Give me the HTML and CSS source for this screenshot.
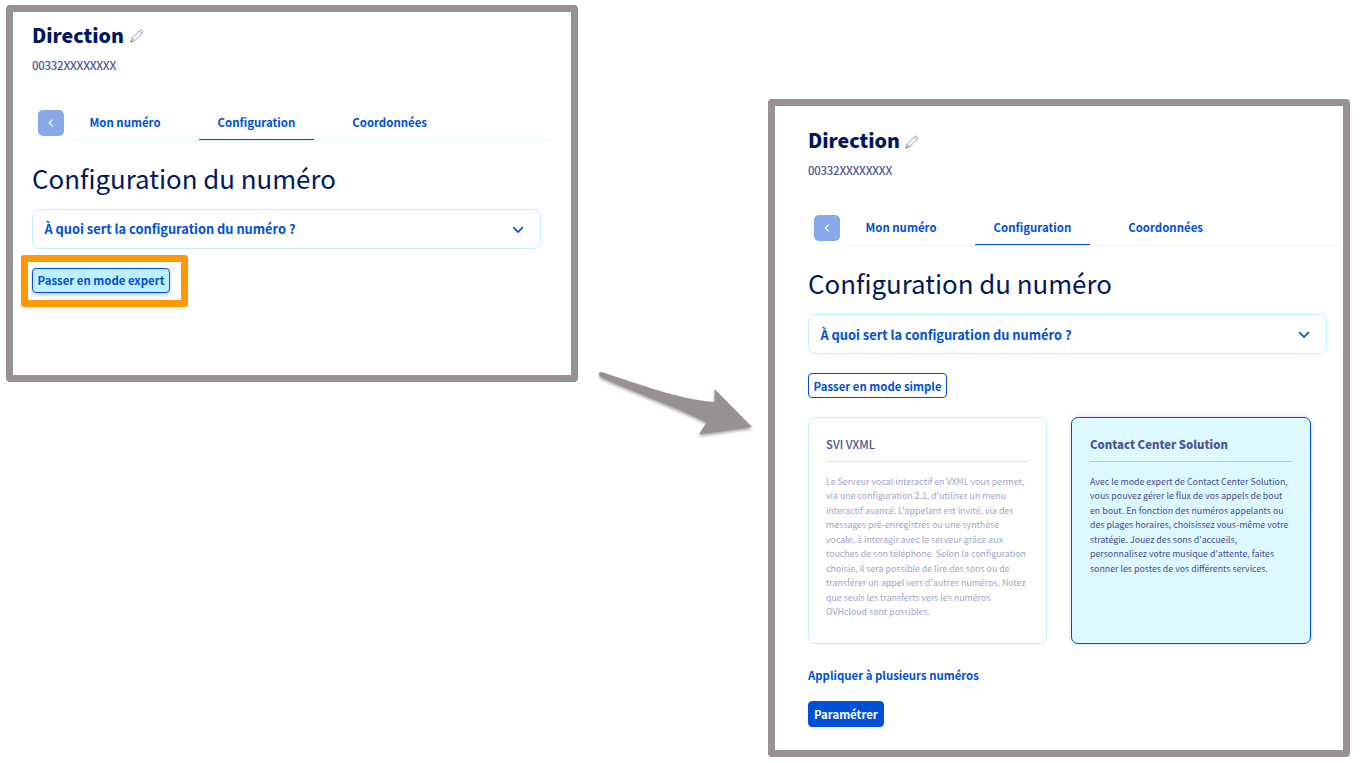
FILE: index.html
```html
<!DOCTYPE html>
<html lang="fr">
<head>
<meta charset="utf-8">
<title>Configuration du numéro</title>
<link rel="stylesheet" href="styles.css">
</head>
<body>
<svg class="defs" width="0" height="0" aria-hidden="true">
  <symbol id="pencil" viewBox="0 0 14 14">
    <path d="M1 13 2.2 9.2 10.2 1.2Q11 .5 11.9 1.3L12.6 2Q13.4 2.9 12.7 3.7L4.8 11.7ZM9.3 2.1 11.9 4.7M2.2 9.2 4.8 11.7"/>
    <path class="lead" d="M.9 13.1 1.5 11.2 2.8 12.5Z"/>
  </symbol>
  <symbol id="chevron-down" viewBox="0 0 12 8"><path d="M1.2 1.2 6 6 10.8 1.2"/></symbol>
  <symbol id="chevron-left" viewBox="0 0 6 8"><path d="M4.6 .7 1.3 4 4.6 7.3"/></symbol>
</svg>
<main class="board">
  <section class="panel panel-simple">
    <header class="title"><h1>Direction</h1><svg class="pencil"><use href="#pencil"/></svg></header>
    <p class="number">00332XXXXXXXX</p>
    <nav class="nav">
      <button class="back" aria-label="Retour"><svg><use href="#chevron-left"/></svg></button>
      <div class="tabs"><a class="tab">Mon numéro</a><a class="tab active">Configuration</a><a class="tab">Coordonnées</a></div>
    </nav>
    <h2>Configuration du numéro</h2>
    <div class="accordion"><span>À quoi sert la configuration du numéro ?</span><svg><use href="#chevron-down"/></svg></div>
    <div class="mode"><button class="btn hovered">Passer en mode expert</button><div class="highlight"></div></div>
  </section>

  <svg class="arrow" viewBox="0 0 160 74">
    <path d="M4.5 4Q1.500 4 2 7Q2.200 8 5 9.400C38 25 78 38 109.500 54.500L102 66.500L155 59L117.500 21V34C82 31.500 42 16 4.500 4Z"/>
  </svg>

  <section class="panel panel-expert">
    <header class="title"><h1>Direction</h1><svg class="pencil"><use href="#pencil"/></svg></header>
    <p class="number">00332XXXXXXXX</p>
    <nav class="nav">
      <button class="back" aria-label="Retour"><svg><use href="#chevron-left"/></svg></button>
      <div class="tabs"><a class="tab">Mon numéro</a><a class="tab active">Configuration</a><a class="tab">Coordonnées</a></div>
    </nav>
    <h2>Configuration du numéro</h2>
    <div class="accordion"><span>À quoi sert la configuration du numéro ?</span><svg><use href="#chevron-down"/></svg></div>
    <div class="mode"><button class="btn">Passer en mode simple</button></div>
    <div class="cards">
      <article class="card">
        <h3>SVI VXML</h3>
        <p>Le Serveur vocal interactif en VXML vous permet,<br>via une configuration 2.1, d'utiliser un menu<br>interactif avancé. L'appelant est invité, via des<br>messages pré-enregistrés ou une synthèse<br>vocale, à interagir avec le serveur grâce aux<br>touches de son téléphone. Selon la configuration<br>choisie, il sera possible de lire des sons ou de<br>transférer un appel vers d'autres numéros. Notez<br>que seuls les transferts vers les numéros<br>OVHcloud sont possibles.</p>
      </article>
      <article class="card selected">
        <h3>Contact Center Solution</h3>
        <p>Avec le mode expert de Contact Center Solution,<br>vous pouvez gérer le flux de vos appels de bout<br>en bout. En fonction des numéros appelants ou<br>des plages horaires, choisissez vous-même votre<br>stratégie. Jouez des sons d'accueils,<br>personnalisez votre musique d'attente, faites<br>sonner les postes de vos différents services.</p>
      </article>
    </div>
    <a class="link">Appliquer à plusieurs numéros</a>
    <button class="btn primary">Paramétrer</button>
  </section>
</main>
</body>
</html>
```
FILE: styles.css
```css
* { box-sizing: border-box; margin: 0; padding: 0; }
body {
  width: 1360px; height: 763px; overflow: hidden; background: #fff;
  font-family: "Noto Sans CJK SC", "Noto Sans", sans-serif;
  font-size: 11.45px; color: #4d5592;
}
.defs { display: block; height: 0; }
.board { display: flex; align-items: flex-start; padding-left: 6px; }
.panel { border: 7px solid #979195; border-radius: 4px; flex: none; }
.panel-simple { width: 571.5px; height: 377px; margin-top: 5.4px; padding: 6.6px 29.5px 0 19px; }
.panel-expert { width: 582px; height: 658px; margin: 99px 0 0 11.9px; padding: 18px 0 0 32.6px; }
.arrow { width: 160px; height: 74px; margin: 367.5px 0 0 19px; flex: none; overflow: visible; }
.arrow path { fill: #979195; filter: drop-shadow(0 2px 1.5px rgba(0, 0, 0, .35)); }

.title { display: flex; align-items: center; height: 30px; }
h1 { font-size: 19.65px; line-height: 30px; padding-top: 2px; font-weight: 900; color: #00185e; }
.pencil { width: 14px; height: 14px; margin: 5px 0 0 5.5px; fill: none; stroke: #7c82b0; stroke-width: .8; }
.pencil .lead { fill: #4d5592; }
.number { height: 20px; line-height: 20px; margin-top: 6px; font-weight: 500; letter-spacing: -.24px; }

.nav { display: flex; align-items: flex-start; margin-top: 30px; padding-left: 6px; }
.back {
  width: 26px; height: 26px; margin-top: 5px; border: 0; border-radius: 5px; background: #87a9ea;
  display: flex; align-items: center; justify-content: center;
}
.back svg { width: 6px; height: 8px; fill: none; stroke: #fff; stroke-width: 1.2; }
.tabs { flex: 1; display: flex; margin: 0 2px 0 6.5px; height: 36px; border-bottom: 1px solid #dff6fd; }
.panel-simple .tabs { margin-right: -11px; }
.tab {
  height: 35px; line-height: 34px; padding: 0 19px; margin-right: 19px;
  color: #0050d7; font-size: 11.43px; font-weight: 700; border-bottom: 1px solid transparent; white-space: nowrap;
}
.tab.active { border-color: #0050d7; }
h2 { margin-top: 17px; height: 40px; line-height: 40px; font-size: 25.85px; font-weight: 400; color: #00185e; white-space: nowrap; }
.accordion {
  display: flex; align-items: center; justify-content: space-between; height: 40px; margin-top: 11px; padding: 0 15.8px 0 11.5px;
  border: 1px solid #bef1ff; border-radius: 7px; color: #0050d7; font-size: 12.82px; font-weight: 700;
}
.panel-expert .accordion { width: 519px; }
.accordion svg { width: 12px; height: 8px; margin-top: 2px; fill: none; stroke: #0050d7; stroke-width: 1.7; }

.mode { position: relative; display: flex; margin-top: 19px; }
.btn {
  height: 25px; padding: 0 4.6px; border: 1px solid #0050d7; border-radius: 4px; background: #fff;
  color: #0050d7; font: inherit; font-size: 11.38px; font-weight: 700; line-height: 22px; white-space: nowrap;
}
.btn.hovered { background: #bef1ff; box-shadow: 0 2px 4px rgba(0, 14, 156, .22); }
.highlight {
  position: absolute; left: -11.5px; top: -13px; width: 167px; height: 52px;
  border: 7px solid #ff9803; border-radius: 3px;
}
.cards { display: flex; gap: 24px; margin-top: 19px; }
.card { width: 239px; height: 227px; padding: 17px 17px 0; border: 1px solid #bef1ff; border-radius: 7px; }
.card h3 { height: 27px; line-height: 19px; font-size: 11.4px; font-weight: 500; border-bottom: 1px solid #bef1ff; }
.card p { margin-top: 13px; font-size: 8.82px; line-height: 14.45px; color: #a1a5c6; white-space: nowrap; }
.card.selected { width: 240px; padding: 17px 18px 0; background: #def8ff; border-color: #0050d7; box-shadow: 0 0 5px rgba(0, 14, 156, .18); }
.card.selected h3 { font-size: 11.36px; font-weight: 900; border-color: #85d9fd; }
.card.selected p { color: #454d8d; }
.link { display: block; height: 20px; line-height: 20px; margin-top: 21px; font-size: 11.38px; font-weight: 700; color: #0050d7; }
.btn.primary { display: block; height: 26px; margin-top: 16px; padding: 0 5px; background: #0050d7; color: #fff; }
```
